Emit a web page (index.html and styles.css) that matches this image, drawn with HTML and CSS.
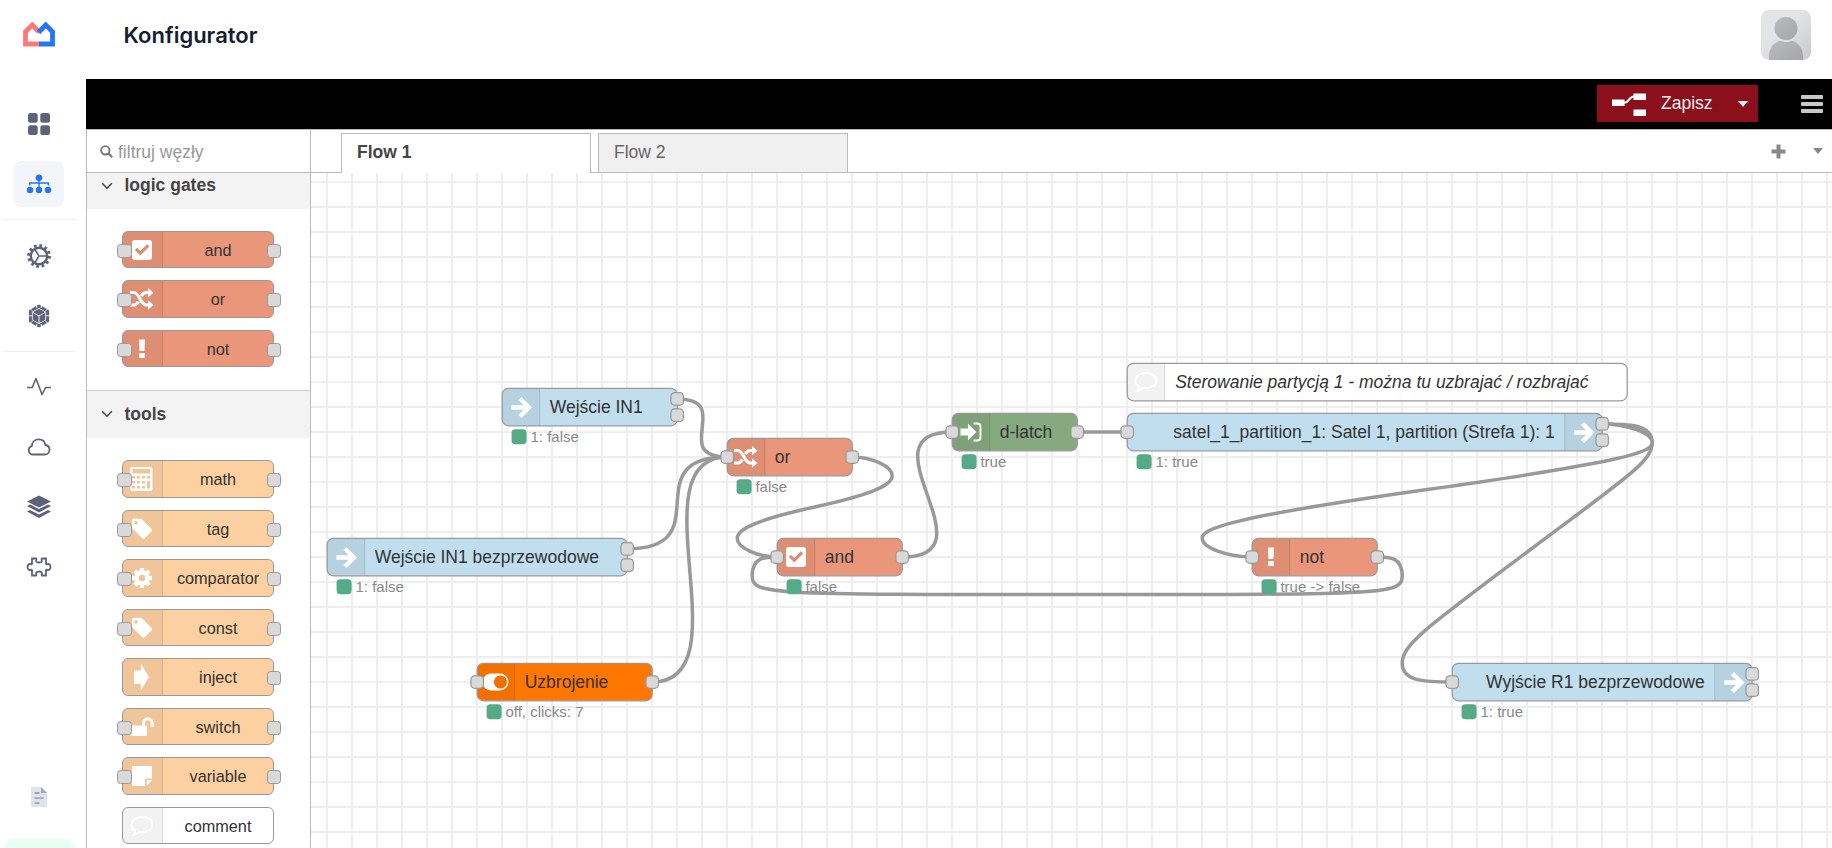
FILE: index.html
```html
<!DOCTYPE html>
<html lang="pl">
<head>
    <meta charset="UTF-8">
    <meta name="viewport" content="width=device-width, initial-scale=1.0">
    <title>Konfigurator</title>
    <link rel="stylesheet" href="styles.css">
</head>
<body>
    <!-- Shared icons -->
    <svg class="sprite" width="0" height="0">
        <symbol id="i-check" viewBox="0 0 30 30">
            <path fill-rule="evenodd" d="M8 5h14a3 3 0 0 1 3 3v14a3 3 0 0 1-3 3H8a3 3 0 0 1-3-3V8a3 3 0 0 1 3-3zM13.4 20.6l9-9-2.3-2.3-6.7 6.7-3.3-3.3-2.3 2.3z"/>
        </symbol>
        <symbol id="i-random" viewBox="0 0 30 30">
            <path d="M3 8.5h3.5c6.5 0 6.5 12.5 13 12.5h2M3 21h3.5c2.3 0 3.8-1.5 4.9-3.6M14.3 12.1c1.2-2.1 2.7-3.600 5.200-3.600h2" fill="none" stroke="#fff" stroke-width="3.2"/>
            <path d="M21 4l5.500 4.700-5.500 4.700zM21 16.300l5.500 4.700-5.500 4.700z"/>
        </symbol>
        <symbol id="i-bang" viewBox="0 0 30 30">
            <path d="M12 5.500h6l-.5 11.500h-5zM12.200 19h5.600v5h-5.600z"/>
        </symbol>
        <symbol id="i-calc" viewBox="0 0 30 30">
            <path fill-rule="evenodd" d="M5 3h18.500a2 2 0 0 1 2 2v20a2 2 0 0 1-2 2H5a2 2 0 0 1-2-2V5a2 2 0 0 1 2-2zM5.500 5v4.500h17.500V5zM5 12v2.600h3V12zM10 12v2.600h3V12zM15 12v2.600h3V12zM20 12v2.600h3V12zM5 17v2.600h3V17zM10 17v2.600h3V17zM15 17v2.600h3V17zM20 17v7.500h3V17zM5 22v2.600h3V22zM10 22v2.600h3V22zM15 22v2.600h3V22z"/>
        </symbol>
        <symbol id="i-tag" viewBox="0 0 30 30">
            <path fill-rule="evenodd" d="M5 6.500A1.700 1.700 0 0 1 6.700 4.800h6.200c.9 0 1.800.4 2.400 1l9.200 9.200a1.700 1.700 0 0 1 0 2.400l-6.800 6.800a1.700 1.700 0 0 1-2.400 0L6 15c-.6-.6-1-1.500-1-2.400zM9 7a1.800 1.800 0 1 0 .01 0z"/>
        </symbol>
        <symbol id="i-cog" viewBox="0 0 30 30">
            <circle cx="15" cy="15" r="5.400" fill="none" stroke="#fff" stroke-width="4.400"/>
            <path d="M13 5h4l.6 4h-5.200zM13 25h4l.6-4h-5.200zM5 13v4l4 .6v-5.200zM25 13v4l-4 .6v-5.200zM9.300 6.500L6.500 9.300l2.400 3.200 3.600-3.600zM20.700 6.500l2.800 2.800-2.400 3.200-3.600-3.600zM9.300 23.500l-2.800-2.800 2.400-3.200 3.600 3.600zM20.700 23.500l2.800-2.800-2.400-3.200-3.600 3.600z"/>
        </symbol>
        <symbol id="i-inject" viewBox="0 0 30 30">
            <path d="M7 8.500h6.800V1.500L22 15l-8.200 13.500v-6.500H7z"/>
        </symbol>
        <symbol id="i-unlock" viewBox="0 0 30 30">
            <path d="M5.200 13.500h13.600a1.300 1.300 0 0 1 1.200 1.300v8a1.300 1.300 0 0 1-1.200 1.200H5.200A1.300 1.300 0 0 1 4 22.800v-8a1.300 1.300 0 0 1 1.200-1.300z"/>
            <path d="M16.500 14v-3a4.300 4.300 0 0 1 8.600 0v4" fill="none" stroke="#fff" stroke-width="3"/>
        </symbol>
        <symbol id="i-note" viewBox="0 0 30 30">
            <path d="M5 5h20v12.500h-5a2 2 0 0 0-2 2V25H5zM19.800 19.300H25L19.800 25z"/>
        </symbol>
        <symbol id="i-comment" viewBox="0 0 30 30">
            <path d="M15 6c6 0 10.600 3.300 10.600 7.600s-4.600 7.600-10.600 7.600c-1 0-2-.1-3-.3-1.500 1.600-3 2.600-5.500 3 1-1.200 1.600-2.600 1.700-4.200C5.700 18.300 4.400 16.100 4.400 13.600 4.400 9.300 9 6 15 6z" fill="none" stroke="#fff" stroke-width="2"/>
        </symbol>
        <symbol id="i-arrow" viewBox="0 0 30 30">
            <path d="M5.500 15.500h16M14 6.500l9 9-9 9" fill="none" stroke="#fff" stroke-width="4.400"/>
        </symbol>
        <symbol id="i-signin" viewBox="0 0 30 30">
            <path d="M4.500 11.500H12V6.500l8.500 8.500-8.500 8.500v-5H4.500z"/>
            <path d="M17.500 6.500h4a3 3 0 0 1 3 3v11a3 3 0 0 1-3 3h-4" fill="none" stroke="#fff" stroke-width="1.900"/>
        </symbol>
        <symbol id="i-toggle" viewBox="0 0 30 30">
            <path fill-rule="evenodd" d="M10 6.500h9a8.500 8.500 0 0 1 0 17h-9a8.500 8.500 0 0 1 0-17zM19.500 8.500a6.500 6.500 0 1 0 .01 0z"/>
        </symbol>
        <symbol id="i-chevron" viewBox="0 0 12 8">
            <path d="M1.200 1.200L6 6.200l4.800-5" fill="none" stroke="#444" stroke-width="1.500"/>
        </symbol>
    </svg>

    <div class="app">
        <aside class="sidebar">
            <svg class="logo" width="32" height="25" viewBox="0 0 32 25">
                <path d="M16 22H2.500V9.700L9.300 2.900 16 10" fill="none" stroke="#ff7875" stroke-width="4.800"/>
                <path d="M15.500 10.500L22.700 2.900 29.500 9.700V22H16" fill="none" stroke="#2474f5" stroke-width="4.800"/>
            </svg>
            <nav class="nav">
                <a class="nav-item">
                    <svg width="22" height="22" viewBox="0 0 22 22" fill="#5e6278"><rect width="9.700" height="9.700" rx="2.500"/><rect x="12.300" width="9.700" height="9.700" rx="2.500"/><rect y="12.300" width="9.700" height="9.700" rx="2.500"/><rect x="12.300" y="12.300" width="9.700" height="9.700" rx="2.500"/></svg>
                </a>
                <a class="nav-item active">
                    <svg width="26" height="20" viewBox="0 0 26 20" fill="#2474f5"><circle cx="13" cy="3.800" r="3.300"/><circle cx="4" cy="16" r="3.200"/><circle cx="13" cy="16" r="3.200"/><circle cx="22" cy="16" r="3.200"/><path d="M13 6v8M3.700 11.500V9h18.600v2.500" fill="none" stroke="#2474f5" stroke-width="1.400"/></svg>
                </a>
                <hr>
                <a class="nav-item">
                    <svg width="26" height="26" viewBox="0 0 26 26" fill="none" stroke="#5e6278"><circle cx="13" cy="13" r="10.400" stroke-width="3" stroke-dasharray="2.700 2.745"/><circle cx="13" cy="13" r="8.200" stroke-width="2.400"/><path d="M13.500 13H21M13 13l-4-6.500M13 13l-4 6.500" stroke-width="1.500"/></svg>
                </a>
                <a class="nav-item">
                    <svg width="24" height="24" viewBox="0 0 24 24"><path d="M12 2.200l8.600 4.900v9.800L12 21.800l-8.600-4.900V7.100z" fill="none" stroke="#5e6278" stroke-width="3"/><path d="M12 4.700l6.300 3.600v7.400L12 19.300l-6.300-3.600V8.300z" fill="#5e6278"/><path d="M6 8.600L12 12l6-3.400M12 12v7M0 11.800h5M19 11.800h5M9 0l1 4M15 0l-1 4M9 24l1-4M15 24l-1-4M3 4.500l3 3M21 4.500l-3 3M3 19.500l3-3M21 19.500l-3-3" fill="none" stroke="#fff" stroke-width=".9"/></svg>
                </a>
                <hr>
                <a class="nav-item">
                    <svg width="26" height="22" viewBox="0 0 26 22" fill="none" stroke="#5e6278" stroke-width="1.600"><path d="M1 11.500h5.300L10 2.500l6 16 3.700-7H25" stroke-linejoin="round"/></svg>
                </a>
                <a class="nav-item">
                    <svg width="24" height="20" viewBox="0 0 24 20" fill="none" stroke="#5e6278" stroke-width="1.800"><path d="M6 17.500a4.300 4.300 0 0 1-1.200-8.400C5 4.800 8 2.300 11.700 2.300c3.600 0 6.200 2.300 6.600 5.700 2.700.4 4.200 2.300 4.200 4.700 0 2.800-2 4.800-4.600 4.800z"/></svg>
                </a>
                <a class="nav-item">
                    <svg width="24" height="24" viewBox="0 0 24 24" fill="#5e6278"><path d="M12 .5l12 6-12 6-12-6zM0 11l3-1.500 9 4.500 9-4.500 3 1.500-12 6.500zM0 16.500L3 15l9 4.500 9-4.500 3 1.500-12 6.500z"/></svg>
                </a>
                <a class="nav-item">
                    <svg width="26" height="22" viewBox="0 0 26 22" fill="none" stroke="#5e6278" stroke-width="1.800"><path d="M6 2.500h3.700c.5 0 .8.300.7.800-.3 1-.5 1.300-.2 2 .4.800 1.500 1.200 2.800 1.200s2.400-.4 2.800-1.200c.3-.7.100-1-.2-2-.1-.5.2-.8.700-.8H20v5c0 .8.500 1 1.200.7 1.800-.7 3.300.5 3.300 2.800s-1.500 3.500-3.300 2.800c-.7-.3-1.200-.1-1.200.7v5h-3.700c-.5 0-.8-.3-.7-.8.3-1 .5-1.300.2-2-.4-.8-1.500-1.200-2.800-1.200s-2.400.4-2.800 1.200c-.3.7-.1 1 .2 2 .1.500-.2.800-.7.800H6v-5c0-.8-.5-1-1.200-.7-1.800.7-3.300-.5-3.300-2.800s1.500-3.500 3.300-2.800c.7.300 1.200.1 1.200-.7z"/></svg>
                </a>
            </nav>
            <div class="sidebar-bottom">
                <svg width="16" height="20" viewBox="0 0 16 20"><path d="M0 0h10l6 6v14H0z" fill="#e1e3ec"/><path d="M10 0l6 6h-6z" fill="#a1a5b7"/><path d="M3.500 6h5M3.500 11.200h9M3.500 16.200h5" stroke="#a1a5b7" stroke-width="1.800"/></svg>
                <div class="sidebar-badge"></div>
            </div>
        </aside>

        <div class="main">
            <header class="topbar">
                <h1>Konfigurator</h1>
                <svg class="avatar" width="50" height="50" viewBox="0 0 50 50">
                    <defs>
                        <linearGradient id="bg" x1="0" y1="0" x2="1" y2="1"><stop offset=".4" stop-color="#e3e4e6"/><stop offset="1" stop-color="#c9cacd"/></linearGradient>
                        <linearGradient id="fg" x1="0" y1="0" x2="1" y2="1"><stop offset="0" stop-color="#bbbcbf"/><stop offset="1" stop-color="#a4a5a9"/></linearGradient>
                    </defs>
                    <rect width="50" height="50" fill="url(#bg)"/>
                    <circle cx="25" cy="18.500" r="11.500" fill="url(#fg)"/>
                    <path d="M8 50v-4c0-8 5-13.500 11-15.300 4 1.800 8 1.800 12 0C37 32.500 42 38 42 46v4z" fill="url(#fg)"/>
                </svg>
            </header>

            <div class="editor-bar">
                <button class="deploy">
                    <svg width="35" height="24" viewBox="0 0 35 24" fill="#fff"><path d="M0 7.500h12.500v6.500H0zM21.500 1.500H34V8H21.500zM21.500 17.500H34V24H21.500z"/><path d="M12 10.800c5.500 0 4.500-6.300 10-6.300" fill="none" stroke="#fff" stroke-width="2"/></svg>
                    <span>Zapisz</span>
                    <i class="caret"></i>
                </button>
                <div class="menu"><i></i><i></i><i></i></div>
            </div>

            <div class="editor">
                <div class="palette">
                    <div class="search">
                        <svg width="13" height="13" viewBox="0 0 13 13" fill="none" stroke="#777"><circle cx="5.300" cy="5.300" r="4.200" stroke-width="1.900"/><path d="M8.500 8.500l3.700 3.700" stroke-width="2.200"/></svg>
                        <span>filtruj węzły</span>
                    </div>
                    <div class="palette-list">
                        <div class="category first"><svg width="12" height="8"><use href="#i-chevron"/></svg>logic gates</div>
                        <div class="nodes">
                            <div class="node gate in out"><svg><use href="#i-check"/></svg><span>and</span></div>
                            <div class="node gate in out"><svg><use href="#i-random"/></svg><span>or</span></div>
                            <div class="node gate in out"><svg><use href="#i-bang"/></svg><span>not</span></div>
                        </div>
                        <div class="category"><svg width="12" height="8"><use href="#i-chevron"/></svg>tools</div>
                        <div class="nodes">
                            <div class="node tool in out"><svg><use href="#i-calc"/></svg><span>math</span></div>
                            <div class="node tool in out"><svg><use href="#i-tag"/></svg><span>tag</span></div>
                            <div class="node tool in out"><svg><use href="#i-cog"/></svg><span>comparator</span></div>
                            <div class="node tool in out"><svg><use href="#i-tag"/></svg><span>const</span></div>
                            <div class="node tool out"><svg><use href="#i-inject"/></svg><span>inject</span></div>
                            <div class="node tool in out"><svg><use href="#i-unlock"/></svg><span>switch</span></div>
                            <div class="node tool in out"><svg><use href="#i-note"/></svg><span>variable</span></div>
                            <div class="node"><svg><use href="#i-comment"/></svg><span>comment</span></div>
                        </div>
                    </div>
                </div>

                <div class="workspace">
                    <div class="tabs">
                        <div class="tab active">Flow 1</div>
                        <div class="tab">Flow 2</div>
                        <div class="tab-tools">
                            <svg width="15" height="15" viewBox="0 0 15 15" fill="#888"><path d="M5.500 .5h4v5h5v4h-5v5h-4v-5h-5v-4h5z"/></svg>
                            <i class="caret grey"></i>
                        </div>
                    </div>

                    <div class="canvas">
                        <svg class="flow" width="1521" height="675">
                            <g transform="translate(16.2 9) scale(1.25)">
                                <!-- Wires -->
                                <g class="wires">
                                    <path d="M280 173.500C326 173.500 274 220 320 220"/>
                                    <path d="M240 293.500C315 293.500 245 220 320 220"/>
                                    <path d="M260 400C335 400 245 220 320 220"/>
                                    <path d="M420 220C436 220 452 227.500 452 235S436 250 390 260S328 277.500 328 285S344 300 360 300"/>
                                    <path d="M460 300C535 300 425 200 500 200"/>
                                    <path d="M600 200H640"/>
                                    <path d="M1020 193.500C1040 193.500 1060 201 1060 208.500S1040 223.500 880 246S700 277.500 700 285S720 300 740 300"/>
                                    <path d="M1020 193.500C1040 193.500 1060 193.500 1060 208.500S1040 236 960 296S860 370 860 385S880 400 900 400"/>
                                    <path d="M840 300C850 300 860 300 860 315S850 330 600 330S340 330 340 315S350 300 360 300"/>
                                </g>

                                <!-- Nodes -->
                                <g transform="translate(140 165)">
                                    <rect class="body blue" width="140" height="30" rx="5"/>
                                    <path class="shade" d="M5 .5H30v29H5A4.500 4.500 0 0 1 .5 25V5A4.500 4.500 0 0 1 5 .5z"/><path class="sep" d="M30 .5v29"/>
                                    <use href="#i-arrow" x="3" y="3" width="24" height="24"/>
                                    <text class="label" x="38" y="19.600">Wejście IN1</text>
                                    <rect class="port" x="135" y="3.500" width="10" height="10" rx="3"/>
                                    <rect class="port" x="135" y="16.500" width="10" height="10" rx="3"/>
                                    <rect class="dot" x="7.500" y="32.800" width="12" height="12" rx="3"/>
                                    <text class="status" x="22.600" y="42.800">1: false</text>
                                </g>
                                <g transform="translate(0 285)">
                                    <rect class="body blue" width="240" height="30" rx="5"/>
                                    <path class="shade" d="M5 .5H30v29H5A4.500 4.500 0 0 1 .5 25V5A4.500 4.500 0 0 1 5 .5z"/><path class="sep" d="M30 .5v29"/>
                                    <use href="#i-arrow" x="3" y="3" width="24" height="24"/>
                                    <text class="label" x="38" y="19.600">Wejście IN1 bezprzewodowe</text>
                                    <rect class="port" x="235" y="3.500" width="10" height="10" rx="3"/>
                                    <rect class="port" x="235" y="16.500" width="10" height="10" rx="3"/>
                                    <rect class="dot" x="7.500" y="32.800" width="12" height="12" rx="3"/>
                                    <text class="status" x="22.600" y="42.800">1: false</text>
                                </g>
                                <g transform="translate(120 385)">
                                    <rect class="body orange" width="140" height="30" rx="5"/>
                                    <path class="shade" d="M5 .5H30v29H5A4.500 4.500 0 0 1 .5 25V5A4.500 4.500 0 0 1 5 .5z"/><path class="sep" d="M30 .5v29"/>
                                    <use href="#i-toggle" x="3" y="3" width="24" height="24"/>
                                    <text class="label" x="38" y="19.600">Uzbrojenie</text>
                                    <rect class="port" x="-5" y="10" width="10" height="10" rx="3"/>
                                    <rect class="port" x="135" y="10" width="10" height="10" rx="3"/>
                                    <rect class="dot" x="7.500" y="32.800" width="12" height="12" rx="3"/>
                                    <text class="status" x="22.600" y="42.800">off, clicks: 7</text>
                                </g>
                                <g transform="translate(320 205)">
                                    <rect class="body salmon" width="100" height="30" rx="5"/>
                                    <path class="shade" d="M5 .5H30v29H5A4.500 4.500 0 0 1 .5 25V5A4.500 4.500 0 0 1 5 .5z"/><path class="sep" d="M30 .5v29"/>
                                    <use href="#i-random" x="3" y="3" width="24" height="24"/>
                                    <text class="label" x="38" y="19.600">or</text>
                                    <rect class="port" x="-5" y="10" width="10" height="10" rx="3"/>
                                    <rect class="port" x="95" y="10" width="10" height="10" rx="3"/>
                                    <rect class="dot" x="7.500" y="32.800" width="12" height="12" rx="3"/>
                                    <text class="status" x="22.600" y="42.800">false</text>
                                </g>
                                <g transform="translate(360 285)">
                                    <rect class="body salmon" width="100" height="30" rx="5"/>
                                    <path class="shade" d="M5 .5H30v29H5A4.500 4.500 0 0 1 .5 25V5A4.500 4.500 0 0 1 5 .5z"/><path class="sep" d="M30 .5v29"/>
                                    <use href="#i-check" x="3" y="3" width="24" height="24"/>
                                    <text class="label" x="38" y="19.600">and</text>
                                    <rect class="port" x="-5" y="10" width="10" height="10" rx="3"/>
                                    <rect class="port" x="95" y="10" width="10" height="10" rx="3"/>
                                    <rect class="dot" x="7.500" y="32.800" width="12" height="12" rx="3"/>
                                    <text class="status" x="22.600" y="42.800">false</text>
                                </g>
                                <g transform="translate(500 185)">
                                    <rect class="body green" width="100" height="30" rx="5"/>
                                    <path class="shade" d="M5 .5H30v29H5A4.500 4.500 0 0 1 .5 25V5A4.500 4.500 0 0 1 5 .5z"/><path class="sep" d="M30 .5v29"/>
                                    <use href="#i-signin" x="3" y="3" width="24" height="24"/>
                                    <text class="label" x="38" y="19.600">d-latch</text>
                                    <rect class="port" x="-5" y="10" width="10" height="10" rx="3"/>
                                    <rect class="port" x="95" y="10" width="10" height="10" rx="3"/>
                                    <rect class="dot" x="7.500" y="32.800" width="12" height="12" rx="3"/>
                                    <text class="status" x="22.600" y="42.800">true</text>
                                </g>
                                <g transform="translate(640 145)">
                                    <rect class="body white" width="400" height="30" rx="5"/>
                                    <path class="shade" d="M5 .5H30v29H5A4.500 4.500 0 0 1 .5 25V5A4.500 4.500 0 0 1 5 .5z"/><path class="sep" d="M30 .5v29"/>
                                    <use href="#i-comment" x="3" y="3" width="24" height="24"/>
                                    <text class="label note" x="38.400" y="19.600">Sterowanie partycją 1 - można tu uzbrajać / rozbrajać</text>
                                </g>
                                <g transform="translate(640 185)">
                                    <rect class="body blue" width="380" height="30" rx="5"/>
                                    <path class="shade" d="M350 .5h25a4.500 4.500 0 0 1 4.500 4.500v20a4.500 4.500 0 0 1-4.500 4.500h-25z"/><path class="sep" d="M350 .5v29"/>
                                    <use href="#i-arrow" x="353" y="3" width="24" height="24"/>
                                    <text class="label end" x="342" y="19.600">satel_1_partition_1: Satel 1, partition (Strefa 1): 1</text>
                                    <rect class="port" x="-5" y="10" width="10" height="10" rx="3"/>
                                    <rect class="port" x="375" y="3.500" width="10" height="10" rx="3"/>
                                    <rect class="port" x="375" y="16.500" width="10" height="10" rx="3"/>
                                    <rect class="dot" x="7.500" y="32.800" width="12" height="12" rx="3"/>
                                    <text class="status" x="22.600" y="42.800">1: true</text>
                                </g>
                                <g transform="translate(740 285)">
                                    <rect class="body salmon" width="100" height="30" rx="5"/>
                                    <path class="shade" d="M5 .5H30v29H5A4.500 4.500 0 0 1 .5 25V5A4.500 4.500 0 0 1 5 .5z"/><path class="sep" d="M30 .5v29"/>
                                    <use href="#i-bang" x="3" y="3" width="24" height="24"/>
                                    <text class="label" x="38" y="19.600">not</text>
                                    <rect class="port" x="-5" y="10" width="10" height="10" rx="3"/>
                                    <rect class="port" x="95" y="10" width="10" height="10" rx="3"/>
                                    <rect class="dot" x="7.500" y="32.800" width="12" height="12" rx="3"/>
                                    <text class="status" x="22.600" y="42.800">true -&gt; false</text>
                                </g>
                                <g transform="translate(900 385)">
                                    <rect class="body blue" width="240" height="30" rx="5"/>
                                    <path class="shade" d="M210 .5h25a4.500 4.500 0 0 1 4.500 4.500v20a4.500 4.500 0 0 1-4.500 4.500h-25z"/><path class="sep" d="M210 .5v29"/>
                                    <use href="#i-arrow" x="213" y="3" width="24" height="24"/>
                                    <text class="label end" x="202" y="19.600">Wyjście R1 bezprzewodowe</text>
                                    <rect class="port" x="-5" y="10" width="10" height="10" rx="3"/>
                                    <rect class="port" x="235" y="3.500" width="10" height="10" rx="3"/>
                                    <rect class="port" x="235" y="16.500" width="10" height="10" rx="3"/>
                                    <rect class="dot" x="7.500" y="32.800" width="12" height="12" rx="3"/>
                                    <text class="status" x="22.600" y="42.800">1: true</text>
                                </g>
                            </g>
                        </svg>
                    </div>
                </div>
            </div>
        </div>
    </div>
</body>
</html>
```
FILE: styles.css
```css
* {
    margin: 0;
    padding: 0;
    box-sizing: border-box;
}
body {
    background: #fff;
    font-family: 'Liberation Sans', Arial, sans-serif;
    font-size: 17.5px;
    color: #444;
    overflow: hidden;
}
.sprite {
    position: absolute;
}
.app {
    display: flex;
    height: 100vh;
}

/* Left menu */
.sidebar {
    width: 86px;
    flex-shrink: 0;
    display: flex;
    flex-direction: column;
    overflow: hidden;
}
.logo {
    margin: 22px 0 0 23px;
    flex-shrink: 0;
}
.nav {
    margin-top: 54px;
    width: 78px;
    display: flex;
    flex-direction: column;
    align-items: center;
    gap: 14px;
}
.nav-item {
    width: 50px;
    height: 46px;
    border-radius: 8px;
    display: flex;
    align-items: center;
    justify-content: center;
}
.nav-item.active {
    background: #f3f5fa;
}
.nav hr {
    width: 72px;
    border: none;
    border-top: 1px solid #eceef2;
    margin: -2px 0 -1.5px;
}
.sidebar-bottom {
    margin-top: auto;
    width: 78px;
    display: flex;
    flex-direction: column;
    align-items: center;
    gap: 32px;
}
.sidebar-badge {
    width: 70px;
    height: 9px;
    border-radius: 8px 8px 0 0;
    background: #e8fff3;
}

/* Top */
.main {
    flex: 1;
    min-width: 0;
    display: flex;
    flex-direction: column;
}
.topbar {
    height: 79px;
    flex-shrink: 0;
    display: flex;
    justify-content: space-between;
    align-items: center;
    padding: 0 21px 9px 37.5px;
}
h1 {
    font-family: Inter, sans-serif;
    font-size: 22px;
    font-weight: 600;
    color: #181c32;
}
.avatar {
    border-radius: 8px;
}
.editor-bar {
    height: 50px;
    flex-shrink: 0;
    background: #000;
    display: flex;
    justify-content: flex-end;
    align-items: center;
    padding-right: 9px;
    gap: 43px;
}
.deploy {
    width: 161px;
    height: 37px;
    margin-bottom: 1px;
    background: #8c101c;
    border: none;
    color: #eee;
    font: inherit;
    display: flex;
    align-items: center;
    padding-left: 15px;
}
.deploy span {
    margin-left: 14px;
}
.deploy .caret {
    margin-left: 25px;
}
.caret {
    border: 5.5px solid transparent;
    border-top: 6px solid #eee;
    border-bottom: none;
}
.caret.grey {
    border-top-color: #888;
}
.menu {
    width: 22px;
    display: flex;
    flex-direction: column;
    gap: 3px;
}
.menu i {
    height: 4px;
    border-radius: 1px;
    background: #c7c7c7;
}

/* Palette */
.editor {
    flex: 1;
    min-height: 0;
    display: flex;
    border-top: 1px solid #bbb;
}
.palette {
    width: 225px;
    flex-shrink: 0;
    border-left: 1px solid #bbb;
    border-right: 1px solid #bbb;
    display: flex;
    flex-direction: column;
}
.search {
    height: 43px;
    flex-shrink: 0;
    border-bottom: 1px solid #bbb;
    display: flex;
    align-items: center;
    gap: 5px;
    padding-left: 13px;
    color: #999;
}
.search span {
    padding-top: 3px;
}
.palette-list {
    flex: 1;
    overflow: hidden;
}
.category {
    height: 48px;
    background: #f3f3f3;
    border-top: 1px solid #ccc;
    font-weight: bold;
    display: flex;
    align-items: center;
    gap: 11.5px;
    padding-left: 14px;
}
.category.first {
    margin-top: -12px;
}
.nodes {
    display: flex;
    flex-direction: column;
    gap: 12px;
    padding: 22.5px 0 22.5px 35px;
}
.category.first + .nodes {
    padding-top: 21.5px;
}
.node {
    position: relative;
    width: 152px;
    height: 37.5px;
    flex-shrink: 0;
    border: 1px solid #999;
    border-radius: 6px;
    background: #fff;
    display: flex;
    font-size: 16.25px;
    color: #333;
}
.node svg {
    width: 40px;
    height: 100%;
    padding: 3px 5px 2.5px 4px;
    background: rgba(0, 0, 0, 0.05);
    border-right: 1px solid rgba(0, 0, 0, 0.1);
    border-radius: 5px 0 0 5px;
    fill: #fff;
}
.node span {
    flex: 1;
    text-align: center;
    line-height: 36px;
}
.gate {
    background: #e9967a;
}
.tool {
    background: #fdd0a2;
}
/* connection points */
.in::before,
.out::after {
    content: '';
    position: absolute;
    top: 12px;
    width: 12.5px;
    height: 12px;
    border: 1px solid #999;
    border-radius: 3.5px;
    background: #d9d9d9;
}
.in::before {
    left: -6px;
}
.out::after {
    right: -8px;
}

/* Workspace */
.workspace {
    flex: 1;
    min-width: 0;
    display: flex;
    flex-direction: column;
}
.tabs {
    height: 43px;
    flex-shrink: 0;
    border-bottom: 1px solid #bbb;
    display: flex;
    align-items: flex-end;
    gap: 7px;
    padding-left: 30px;
}
.tab {
    width: 250px;
    height: 39px;
    background: #f0f0f0;
    border: 1px solid #bbb;
    border-bottom: none;
    padding-left: 15px;
    line-height: 37px;
    color: #666;
}
.tab.active {
    height: 40px;
    margin-bottom: -1px;
    background: #fff;
    color: #444;
    font-weight: bold;
}
.tab-tools {
    margin-left: auto;
    height: 100%;
    display: flex;
    align-items: center;
    gap: 27px;
    padding-right: 9px;
}
.canvas {
    flex: 1;
    min-height: 0;
    overflow: hidden;
    background-image: linear-gradient(#eee 2px, transparent 2px), linear-gradient(90deg, #eee 2px, transparent 2px);
    background-size: 25px 25px;
    background-position: 15px 8px;
}
.flow {
    display: block;
    fill: #fff;
}
.wires path {
    fill: none;
    stroke: #999;
    stroke-width: 2.8;
}
.body {
    stroke: #999;
    stroke-width: 1;
}
.blue {
    fill: #c0deed;
}
.orange {
    fill: #ff7700;
}
.salmon {
    fill: #e9967a;
}
.green {
    fill: #87a980;
}
.white {
    fill: #fff;
}
.shade {
    fill: #000;
    fill-opacity: 0.05;
}
.sep {
    stroke: #000;
    stroke-opacity: 0.1;
}
.port {
    fill: #d9d9d9;
    stroke: #999;
}
.dot {
    fill: #5a8;
}
.label {
    font-size: 14px;
    fill: #333;
}
.label.end {
    text-anchor: end;
}
.label.note {
    font-style: italic;
}
.status {
    font-size: 12px;
    fill: #888;
}
```
